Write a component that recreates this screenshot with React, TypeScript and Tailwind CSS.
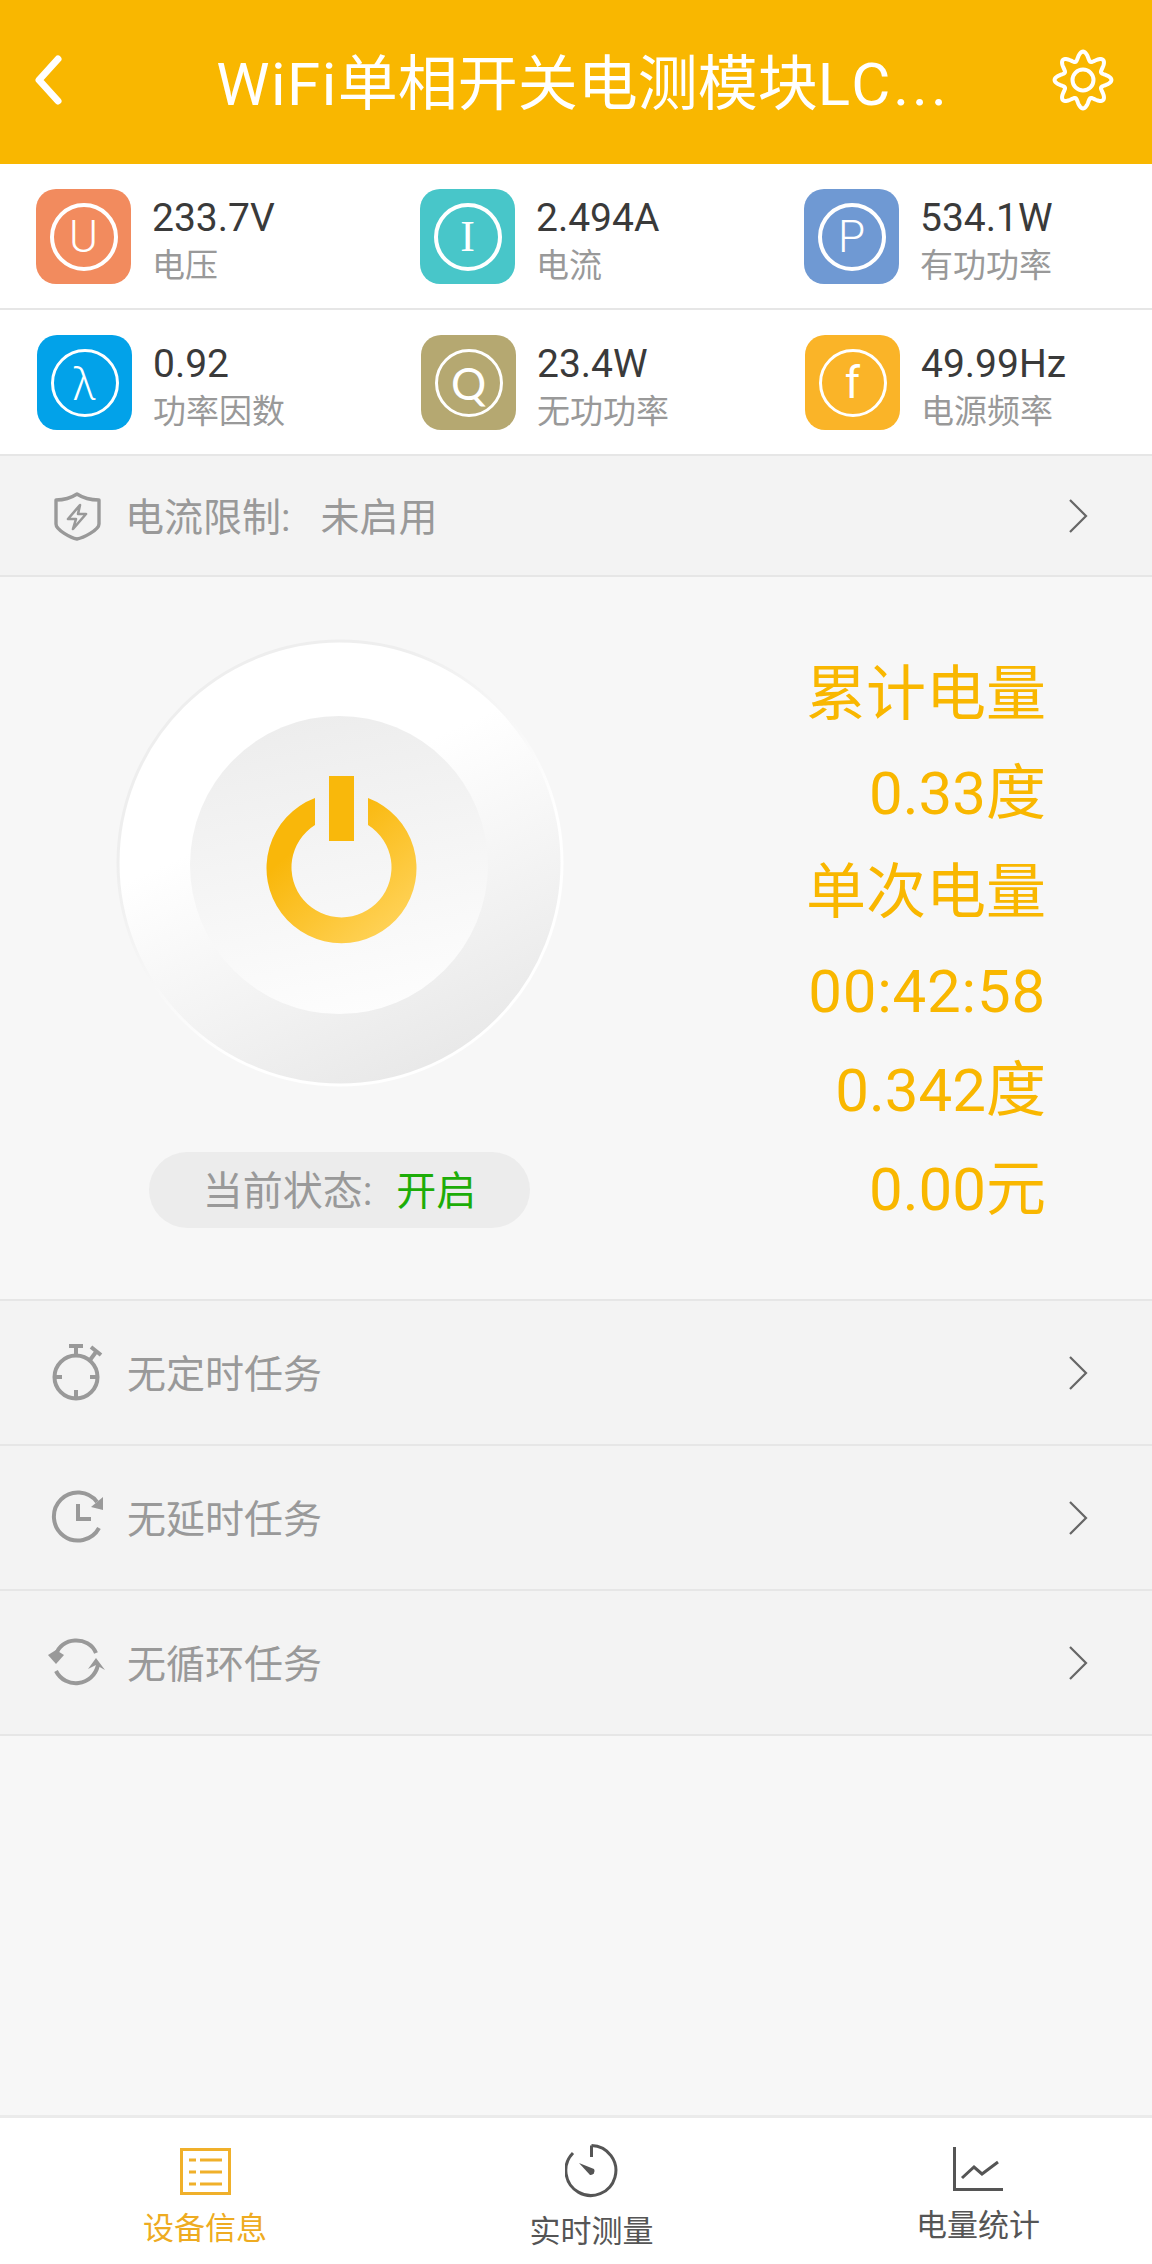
import React from "react";

const FONT = "font-['Roboto','Noto_Sans_CJK_SC',sans-serif]";

const stats = [
  [
    { letter: "U", value: "233.7V", label: "电压", bg: "bg-[#f28b5e]", face: "font-['Roboto',sans-serif] font-light border-[4px]" },
    { letter: "I", value: "2.494A", label: "电流", bg: "bg-[#48c6c9]", face: "font-['Liberation_Serif',serif] border-[4px]" },
    { letter: "P", value: "534.1W", label: "有功功率", bg: "bg-[#6f99d3]", face: "font-['Roboto',sans-serif] font-light border-[4px]" },
  ],
  [
    { letter: "λ", value: "0.92", label: "功率因数", bg: "bg-[#02a2e9]", face: "font-['Noto_Sans',sans-serif] font-light border-[3px]" },
    { letter: "Q", value: "23.4W", label: "无功功率", bg: "bg-[#b5a871]", face: "font-['Lato',sans-serif] font-normal border-[3px]" },
    { letter: "f", value: "49.99Hz", label: "电源频率", bg: "bg-[#fab428]", face: "font-['Roboto',sans-serif] font-normal border-[3px]" },
  ],
];

// 8 lobe gear outline, easier to compute than to write out by hand
const gearPath = () => {
  const pts: string[] = [];
  for (let i = 0; i < 240; i++) {
    const a = (i / 240) * Math.PI * 2;
    const r = 24 + 4.4 * Math.cos(8 * a);
    pts.push(`${(34 + r * Math.sin(a)).toFixed(2)} ${(34 - r * Math.cos(a)).toFixed(2)}`);
  }
  return `M${pts.join(" L")} Z`;
};

const Chevron = () => (
  <svg width="24" height="36" viewBox="0 0 24 36" fill="none" className="ml-auto mr-[62px]">
    <path d="M4 2 L20 18 L4 34" stroke="#666" strokeWidth="2.2" />
  </svg>
);

const ShieldIcon = () => (
  <svg width="60" height="60" viewBox="0 0 60 60" fill="none" stroke="#999" strokeWidth="3.4">
    <path d="M30 8 C24 12 16 14 9 14 V38 C9 44 24 52 30 53 C36 52 52 44 52 38 V14 C44 14 36 12 30 8 Z" strokeLinejoin="round" />
    <path d="M33 19 L21 33 H29 L26 43 L39 28 H31 Z" strokeWidth="2.6" strokeLinejoin="round" />
  </svg>
);

const StopwatchIcon = () => (
  <svg width="60" height="60" viewBox="0 0 60 60" fill="none" stroke="#999" strokeWidth="4">
    <circle cx="29" cy="34" r="21.5" />
    <path d="M22 3 H36 M29 3 V13 M29 47 V55 M8 34 H15 M43 34 H50" />
    <path d="M43 17 L49 9 M44 4 L54 12" />
  </svg>
);

const ClockIcon = () => (
  <svg width="60" height="60" viewBox="0 0 60 60" fill="none" stroke="#999" strokeWidth="4">
    <path d="M50 14 A24 24 0 1 0 52 40" />
    <path d="M31 16 V31 H44" />
    <path d="M56 9 L56 22 L44 19 Z" fill="#999" stroke="none" />
  </svg>
);

const LoopIcon = () => (
  <svg width="60" height="60" viewBox="0 0 60 60" fill="none" stroke="#999" strokeWidth="4">
    <path d="M9 22 C13 4 42 2 49 20" />
    <path d="M51 32 C46 54 18 56 9 38" />
    <path d="M1 22 L9 31 L17 22 L9 17 Z" fill="#999" stroke="none" />
    <path d="M41 36 L49 25 L58 37 L49 32 Z" fill="#999" stroke="none" />
  </svg>
);

const Row = ({ icon, children, h, gap = "ml-[20px]" }: { icon: React.ReactNode; children: React.ReactNode; h: string; gap?: string }) => (
  <div className={`flex items-center bg-[#f3f3f3] pl-[47px] border-b-2 border-[#e6e6e6] ${h}`}>
    {icon}
    <span className={`pt-[5px] text-[39px] text-[#999] ${gap}`}>{children}</span>
    <Chevron />
  </div>
);

const PowerButton = () => (
  <svg width="448" height="448" viewBox="0 0 448 448" fill="none">
    <defs>
      <linearGradient id="outer" x1="0.3" y1="0.1" x2="0.7" y2="0.95">
        <stop offset="0.3" stopColor="#ffffff" />
        <stop offset="1" stopColor="#e9e9e9" />
      </linearGradient>
      <linearGradient id="rim" x1="0.2" y1="0.1" x2="0.8" y2="0.9">
        <stop offset="0.2" stopColor="#eeeeee" />
        <stop offset="0.7" stopColor="#ffffff" />
      </linearGradient>
      <linearGradient id="inner" x1="0.4" y1="0" x2="0.6" y2="1">
        <stop offset="0" stopColor="#ededed" />
        <stop offset="1" stopColor="#fdfdfd" />
      </linearGradient>
      <linearGradient id="gold" x1="0.15" y1="0.1" x2="0.85" y2="0.9">
        <stop offset="0.2" stopColor="#f9b70a" />
        <stop offset="1" stopColor="#ffd257" />
      </linearGradient>
    </defs>
    <circle cx="224" cy="224" r="222" fill="url(#outer)" stroke="url(#rim)" strokeWidth="3" />
    <circle cx="223" cy="226" r="149" fill="url(#inner)" />
    <path d="M199 159 A75 75 0 1 0 252 159 V186 A50 50 0 1 1 199 186 Z" fill="url(#gold)" />
    <rect x="213" y="137" width="25" height="65" fill="#f9b80b" />
  </svg>
);

const App = () => {
  return (
    <div className={`${FONT} w-[1152px] h-[2264px] flex flex-col bg-[#f7f7f7]`}>
      <header className="h-[164px] bg-[#f9b700] flex items-start text-white">
        <svg width="36" height="56" viewBox="0 0 36 56" fill="none" className="ml-[31px] mt-[52px]">
          <path d="M27 7 L8 28 L27 49" stroke="#fff" strokeWidth="7" strokeLinecap="round" strokeLinejoin="round" />
        </svg>
        <h1 className="flex-1 text-center text-[60px] leading-[170px] font-normal pl-[50px] truncate">
          <span className="tracking-[1.5px]">WiFi</span>单相开关电测模块<span className="tracking-[3px]">LC...</span>
        </h1>
        <svg width="68" height="68" viewBox="0 0 68 68" fill="none" stroke="#fff" strokeWidth="4" className="mr-[35px] mt-[46px]">
          <path d={gearPath()} />
          <circle cx="34" cy="34" r="10.5" />
        </svg>
      </header>

      <section className="bg-white">
        {stats.map((row, i) => (
          <div key={i} className="h-[146px] grid grid-cols-3 border-b-2 border-[#e6e6e6]">
            {row.map((s) => (
              <div key={s.letter} className={`flex items-start pt-[25px] ${i === 0 ? "pl-[36px]" : "pl-[37px]"}`}>
                <div className={`w-[95px] h-[95px] rounded-[20px] flex items-center justify-center shrink-0 ${s.bg}`}>
                  <div className={`w-[68px] h-[68px] rounded-full border-white flex items-center justify-center text-white text-[44px] leading-none ${s.face}`}>
                    {s.letter}
                  </div>
                </div>
                <div className="ml-[21px] pt-[5px]">
                  <div className="text-[39px] leading-[48px] text-[#3a3a3a]">{s.value}</div>
                  <div className="text-[33px] leading-[48px] text-[#999]">{s.label}</div>
                </div>
              </div>
            ))}
          </div>
        ))}
      </section>

      <Row icon={<ShieldIcon />} h="h-[121px]" gap="ml-[18px]">
        电流限制:<span className="ml-[30px]">未启用</span>
      </Row>

      <main className="h-[724px] flex border-b-2 border-[#e6e6e6]">
        <div className="w-[680px] flex flex-col items-start pl-[116px] pt-[62px]">
          <PowerButton />
          <div className="ml-[33px] mt-[65px] w-[381px] h-[76px] rounded-full bg-[#ececec] flex items-center justify-center text-[40px] pt-[4px]">
            <span className="text-[#999]">当前状态:</span>
            <span className="ml-[24px] text-[#1dad08]">开启</span>
          </div>
        </div>
        <div className="flex-1 flex flex-col items-end pr-[106px] pt-[68px] text-[#f9b700] text-[60px] leading-[99px]">
          <div>累计电量</div>
          <div>0.33度</div>
          <div>单次电量</div>
          <div className="tracking-[0.8px]">00:42:58</div>
          <div>0.342度</div>
          <div>0.00元</div>
        </div>
      </main>

      <Row icon={<StopwatchIcon />} h="h-[145px]">无定时任务</Row>
      <Row icon={<ClockIcon />} h="h-[145px]">无延时任务</Row>
      <Row icon={<LoopIcon />} h="h-[145px]">无循环任务</Row>

      <div className="flex-1" />

      <nav className="h-[149px] bg-white border-t-[3px] border-[#ebebeb] flex justify-between pl-[140px] pr-[109px] text-[31px] text-[#555]">
        <div className="w-[130px] flex flex-col items-center pt-[30px] text-[#eeab21]">
          <svg width="51" height="47" viewBox="0 0 51 47" fill="none" stroke="#f0b02a" strokeWidth="3">
            <rect x="1.5" y="1.5" width="48" height="44" />
            <path d="M9 12 H16 M20 12 H42 M9 24 H16 M20 24 H42 M9 36 H16 M20 36 H42" />
          </svg>
          <span className="mt-[16px] leading-[36px]">设备信息</span>
        </div>
        <div className="w-[130px] flex flex-col items-center pt-[26px]">
          <svg width="54" height="54" viewBox="0 0 54 54" fill="none" stroke="#555" strokeWidth="3">
            <path d="M26.5 1.5 A25 25 0 1 1 8 9" />
            <path d="M26.5 1.5 V13" />
            <path d="M14 19 L29 25 A4 4 0 0 1 25 31 Z" fill="#555" stroke="none" />
          </svg>
          <span className="mt-[16px] leading-[36px]">实时测量</span>
        </div>
        <div className="w-[130px] flex flex-col items-center pt-[29px]">
          <svg width="50" height="44" viewBox="0 0 50 44" fill="none" stroke="#555" strokeWidth="3">
            <path d="M1.5 0 V42.5 H50" />
            <path d="M9 31 L21 20 L29 27 L45 15" />
          </svg>
          <span className="mt-[17px] leading-[36px]">电量统计</span>
        </div>
      </nav>
    </div>
  );
};

export default App;
